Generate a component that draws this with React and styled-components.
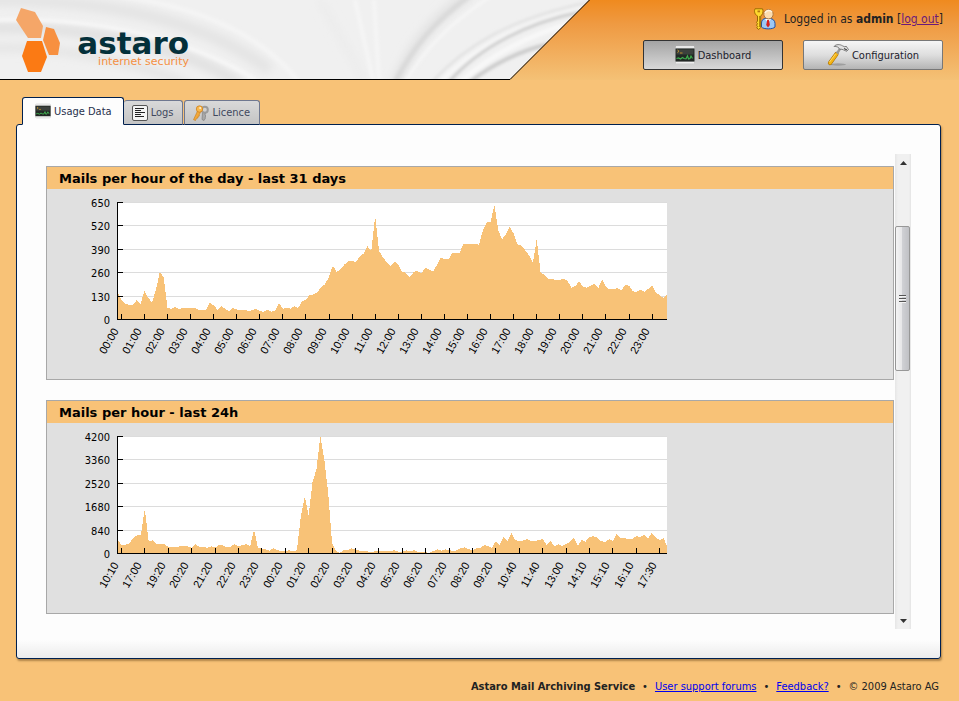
import React, { useState } from "react";
import styled, { createGlobalStyle } from "styled-components";

const GlobalStyle = createGlobalStyle`
  * {
    box-sizing: border-box;
  }
  body {
    margin: 0;
    background-color: #f8c277;
    color: #222;
    font-family: "DejaVu Sans Condensed", "DejaVu Sans", sans-serif;
    font-size: 11px;
    line-height: 16px;
  }
`;

const Header = styled.header`
  display: flex;
  justify-content: space-between;
  height: 80px;
  background: linear-gradient(#ef8a1f, #ef9a42 30%, #f2b060 70%, #f4c176);
`;

const Banner = styled.svg`
  flex: none;
  width: 590px;
  height: 80px;
`;

const HeaderSide = styled.div`
  display: flex;
  flex-direction: column;
  align-items: flex-end;
  gap: 10px;
  padding: 8px 16px 0 0;
`;

const Session = styled.div`
  display: flex;
  align-items: center;
  gap: 8px;
  height: 22px;
  font-size: 12px;
  white-space: nowrap;

  a {
    color: #6a1a7a;
  }
`;

const MainNav = styled.nav`
  display: flex;
  gap: 20px;
`;

const NavButton = styled.button`
  display: flex;
  align-items: center;
  justify-content: center;
  gap: 3px;
  width: 140px;
  height: 30px;
  padding: 0;
  border: 1px solid ${(props) => (props.$active ? "#333" : "#777")};
  border-radius: 2px;
  background: ${(props) =>
    props.$active
      ? "linear-gradient(#a4a4a4, #d8d8d8)"
      : "linear-gradient(#f6f6f6, #dedede 50%, #b4b4b4)"};
  color: #1c1c2c;
  font-family: inherit;
  font-size: 11px;
`;

const Main = styled.main`
  padding: 17px 18px 0 16px;
`;

const TabList = styled.div`
  display: flex;
  align-items: flex-end;
  padding-left: 6px;
`;

const Tab = styled.button`
  position: relative;
  display: flex;
  align-items: center;
  gap: 3px;
  height: ${(props) => (props.$active ? 28 : 25)}px;
  margin: 0 ${(props) => (props.$active ? 0 : 1)}px -1px 0;
  padding: 0 ${(props) => (props.$active ? "11px 0 12px" : "9px 0 8px")};
  border: 1px solid ${(props) => (props.$active ? "#00204f" : "#6f7890")};
  border-bottom-color: ${(props) => (props.$active ? "#fdfdfd" : "#00204f")};
  border-left-width: ${(props) => (props.$joined ? 0 : 1)}px;
  border-radius: 3px 3px 0 0;
  background: ${(props) =>
    props.$active ? "#fdfdfd" : "linear-gradient(#d9d9d9, #c4c4c4)"};
  color: ${(props) => (props.$active ? "#27304c" : "#41485e")};
  font-family: inherit;
  font-size: 11px;
`;

const Panel = styled.section`
  display: flex;
  padding: 29px;
  border: 1px solid #00204f;
  border-radius: 3px;
  background: linear-gradient(to top, #ececec, #fdfdfd 18px);
  box-shadow: 1px 2px 2px rgba(90, 60, 20, 0.45);
`;

const Reports = styled.div`
  display: flex;
  flex: 1;
  flex-direction: column;
  gap: 20px;
  min-width: 0;
  padding: 12px 0 15px;
`;

const Card = styled.article`
  border: 1px solid #a8a8a8;
  background-color: #e0e0e0;
  overflow: hidden;
`;

const CardTitle = styled.h2`
  height: 22px;
  margin: 0;
  padding: 1px 12px 0;
  background-color: #f8c277;
  color: #000;
  font-family: "DejaVu Sans", sans-serif;
  font-size: 13px;
  font-weight: bold;
  line-height: 22px;
`;

const ChartSvg = styled.svg`
  display: block;
  width: 622px;
  height: 190px;
`;

const Scrollbar = styled.div`
  display: flex;
  flex: none;
  flex-direction: column;
  width: 16px;
  margin-left: 1px;
  background: linear-gradient(to right, #e6e6e6, #f0f0f0 3px, #f0f0f0 14px, #e4e4e4);
`;

const ScrollArrow = styled.button`
  display: flex;
  flex: none;
  align-items: center;
  justify-content: center;
  height: 17px;
  padding: 0;
  border: 0;
  background: none;
`;

const ScrollSpace = styled.div`
  flex: ${(props) => props.$size};
`;

const ScrollThumb = styled.div`
  display: flex;
  flex: 144;
  align-items: center;
  justify-content: center;
  width: 15px;
  border: 1px solid #979797;
  border-radius: 2px;
  background: linear-gradient(to right, #f4f4f4, #e6e6e8 45%, #cfd0d4 50%, #c0c1c5);
`;

const Footer = styled.footer`
  display: flex;
  flex-wrap: wrap;
  justify-content: flex-end;
  gap: 7px;
  padding: 20px 20px 6px;

  a {
    color: #0000ee;
  }
`;

function MonitorIcon({ size }) {
  return (
    <svg width={size} height={size} viewBox="0 0 20 20">
      <rect x="0.5" y="1" width="19" height="18" rx="1.5" fill="#c9c9c9" />
      <rect x="1" y="1" width="18" height="2" fill="#e8e8e8" />
      <rect x="0.5" y="3.5" width="19" height="13" fill="#222824" />
      <rect x="1.5" y="4.5" width="17" height="5" fill="#3c413d" />
      <path d="M2.500 5l1.500 1.300L2.500 7.500M5 8h2.500" fill="none" stroke="#c9972a" strokeWidth="0.9" />
      <path
        d="M1.500 13.500l2-.5 2 1 2-1.500 1.500 1 2 .3 1.500-3 1 3.200 1.500-.5 1-2.500 1.500 2.500"
        fill="none"
        stroke="#3fb04f"
        strokeWidth="1.2"
      />
      <rect x="1" y="17" width="18" height="1.500" fill="#efefef" />
    </svg>
  );
}

function LogsIcon() {
  return (
    <svg width="16" height="16" viewBox="0 0 16 16">
      <rect x="0.5" y="0.5" width="15" height="15" rx="1.5" fill="#f4f4f4" stroke="#555" />
      <path
        d="M3 3.500h9M3 5.500h6M3 7.500h10M3 9.500h6M3 11.500h9"
        stroke="#222"
        shapeRendering="crispEdges"
      />
    </svg>
  );
}

function KeysIcon() {
  return (
    <svg width="16" height="16" viewBox="0 0 16 16">
      <path d="M9.500 7l3 1-.5 2 1 1-1 1 .5 1-1.500 2.500-2-1z" fill="#a9a9a9" stroke="#777" strokeWidth="0.6" />
      <circle cx="11.800" cy="4.800" r="3" fill="none" stroke="#9b9b9b" strokeWidth="2" />
      <path d="M4.500 6l3 1.500-1.500 2.500.5 1-1.500.5v1.500l-1.500.3-1 2.200-2-.8z" fill="#f2a83a" stroke="#c57c1c" strokeWidth="0.6" />
      <circle cx="6.500" cy="4" r="3.200" fill="#f8b84c" stroke="#cf8220" strokeWidth="0.8" />
      <circle cx="7.200" cy="3" r="1" fill="#fff0d0" />
    </svg>
  );
}

function HammerIcon() {
  return (
    <svg width="22" height="22" viewBox="0 0 22 22">
      <ellipse cx="11" cy="20.500" rx="8" ry="1.200" fill="#000" opacity="0.18" />
      <path d="M9.500 10L3 19" stroke="#a86d00" strokeWidth="4.200" strokeLinecap="round" />
      <path d="M9.500 10L3 19" stroke="#f4b414" strokeWidth="3" strokeLinecap="round" />
      <path d="M8.500 10L2.500 18" stroke="#ffe27a" strokeWidth="0.8" />
      <path d="M10 9.500l3.500-5.500" stroke="#999" strokeWidth="2.400" />
      <path
        d="M7 2.500C9 0 13 .2 15.500 1.800L18 3l1-1 2.500 3.500-1.800 1.800-3-1.300-1.700-.7-2.500-.2-1-1.600C10 2.500 8 2.300 7 2.500z"
        fill="#e2e2e2"
        stroke="#666"
        strokeWidth="0.8"
      />
      <path d="M17 4.500l3 1.500" stroke="#444" strokeWidth="1.200" />
    </svg>
  );
}

function AdminIcon() {
  return (
    <svg width="22" height="22" viewBox="0 0 22 22">
      <path
        d="M7.500 19v-4c0-3 2-4.500 4-4.500h4.500c3 0 5 2.500 5 5V19c-2 2.500-11.500 2.500-13.500 0z"
        fill="#9cc8f4"
        stroke="#1a4fa8"
      />
      <path d="M11 11l3 3.500 3-3.500z" fill="#fff" />
      <path d="M13.200 12h1.700l1 5-1.900 2.500-1.800-2.500z" fill="#d8201c" />
      <circle cx="14.500" cy="6.200" r="4.700" fill="#fbdcae" stroke="#b0783c" />
      <path d="M11 5c1-3 5-3.500 7-1" stroke="#fff3de" strokeWidth="1.500" fill="none" />
      <path
        d="M1 .800h7.500c.8 1.500.8 4.500-.8 6.200l-1 1v11.500l-2 2-2-1.700 1-1.400-1.200-1.200 1-1.500-1-1.300 1-1.400V8C.5 6.500 0 3 1 .800z"
        fill="#ffd92e"
        stroke="#9a6a00"
      />
      <rect x="3.500" y="2.500" width="2.500" height="1.800" fill="#b67a10" />
      <path d="M5.500 8v11" stroke="#b8860b" />
    </svg>
  );
}

function HeaderBanner() {
  return (
    <Banner viewBox="0 0 590 80">
      <defs>
        <clipPath id="banner-shape">
          <path d="M0 0H589L510 79H0z" />
        </clipPath>
        <filter id="fold" x="-20%" y="-20%" width="140%" height="140%">
          <feGaussianBlur stdDeviation="1.500" />
        </filter>
        <filter id="wideFold" x="-20%" y="-50%" width="140%" height="200%">
          <feGaussianBlur stdDeviation="4" />
        </filter>
      </defs>
      <g clipPath="url(#banner-shape)" fill="none">
        <rect width="590" height="80" fill="#f0f0f0" />
        <g filter="url(#wideFold)">
          <path d="M-10 0C80 0 190 10 270 70" stroke="#e4e4e4" strokeWidth="12" />
          <path d="M-10 28C80 26 180 44 240 84" stroke="#e0e0e0" strokeWidth="10" />
          <path d="M-10 48C60 46 140 62 190 86" stroke="#e4e4e4" strokeWidth="8" />
          <path d="M470-6C430 20 410 50 395 84" stroke="#e2e2e2" strokeWidth="10" />
          <path d="M320 0C335 30 350 50 365 84" stroke="#ebebeb" strokeWidth="6" />
        </g>
        <g filter="url(#fold)">
          <path d="M-10 20C90 16 190 36 262 84" stroke="#f6f6f6" strokeWidth="4" />
          <path d="M120-4C190 6 260 30 300 84" stroke="#f4f4f4" strokeWidth="5" />
          <path d="M374 0L379 80M355 0L373 80" stroke="#f5f5f5" strokeWidth="4" />
          <path d="M475-8C432 22 412 50 395 82" stroke="#dadada" strokeWidth="5" />
          <path d="M494-6C446 26 424 50 404 84" stroke="#f6f6f6" strokeWidth="3" />
          <path d="M590 2C510 18 465 46 432 82" stroke="#dfdfdf" strokeWidth="2" />
          <path d="M590 8C515 24 475 48 440 82" stroke="#f7f7f7" strokeWidth="4" />
          <path d="M580 12C530 22 480 46 449 82" stroke="#cccccc" strokeWidth="3" />
          <path d="M570 24C530 34 490 56 460 82" stroke="#f8f8f8" strokeWidth="5" />
          <path d="M550 44C520 50 490 66 470 82" stroke="#cccccc" strokeWidth="4" />
        </g>
      </g>
      <path d="M0 79.500H510L589.500 0" fill="none" stroke="#000" />
      <path d="M21 8l14 4 8 14-2 12H28L16 20z" fill="#f5a668" />
      <path d="M46 27l8 2 6 14-2 12h-9l-6-15z" fill="#f79040" />
      <path d="M27 41h15l5 16-6 15H28l-6-16z" fill="#fb7a14" />
      <text
        x="189"
        y="54"
        textAnchor="end"
        fill="#04303a"
        fontFamily="DejaVu Sans, sans-serif"
        fontWeight="bold"
        fontSize="31"
      >
        astaro
      </text>
      <text
        x="189"
        y="65"
        textAnchor="end"
        fill="#f58f42"
        fontFamily="DejaVu Sans, sans-serif"
        fontSize="11"
      >
        internet security
      </text>
    </Banner>
  );
}

// samples are taken on a scale of 0 to 348, the top grid line
const SAMPLE_MAX = 348;
const PLOT = { left: 71, right: 620, top: 13, bottom: 130 };

const dayOfMonthMails = {
  title: "Mails per hour of the day - last 31 days",
  scale: [650, 520, 390, 260, 130, 0],
  labels: [
    "00:00", "01:00", "02:00", "03:00", "04:00", "05:00", "06:00", "07:00",
    "08:00", "09:00", "10:00", "11:00", "12:00", "13:00", "14:00", "15:00",
    "16:00", "17:00", "18:00", "19:00", "20:00", "21:00", "22:00", "23:00",
  ],
  samples: [
    82, 58, 45, 42, 42, 56, 45, 84, 62, 50, 87, 140, 124, 34, 30, 36, 30, 33,
    33, 33, 33, 28, 28, 28, 48, 40, 28, 39, 30, 24, 33, 28, 28, 27, 24, 26,
    30, 24, 21, 27, 21, 26, 48, 31, 32, 31, 38, 33, 53, 58, 72, 73, 80, 96,
    104, 126, 159, 140, 148, 162, 171, 174, 169, 186, 195, 216, 203, 306, 203,
    184, 169, 156, 171, 161, 141, 137, 124, 140, 143, 136, 152, 147, 141, 159,
    182, 179, 177, 195, 195, 198, 225, 222, 222, 224, 220, 264, 288, 290, 338,
    264, 237, 252, 274, 254, 222, 219, 205, 189, 167, 238, 138, 131, 118, 119,
    115, 117, 119, 114, 93, 98, 111, 97, 93, 99, 105, 92, 117, 96, 88, 88, 92,
    84, 102, 99, 82, 81, 87, 81, 90, 99, 78, 71, 61, 74,
  ],
};

const lastDayMails = {
  title: "Mails per hour - last 24h",
  scale: [4200, 3360, 2520, 1680, 840, 0],
  labels: [
    "10:10", "17:00", "19:20", "20:20", "21:20", "22:20", "23:20", "00:20",
    "01:20", "02:20", "03:20", "04:20", "05:20", "06:20", "07:20", "08:20",
    "09:20", "10:40", "11:40", "13:00", "14:10", "15:10", "16:10", "17:30",
  ],
  samples: [
    39, 24, 24, 29, 44, 53, 54, 132, 34, 38, 27, 27, 27, 18, 18, 18, 20, 22,
    20, 15, 26, 18, 19, 15, 20, 16, 24, 23, 17, 19, 26, 20, 23, 26, 20, 70,
    16, 13, 11, 7, 14, 8, 6, 6, 8, 6, 8, 110, 168, 112, 212, 248, 348, 280,
    180, 30, 6, 1, 8, 9, 14, 10, 7, 6, 5, 3, 5, 6, 6, 6, 6, 8, 4, 3, 8, 6, 8,
    4, 3, 2, 0, 6, 11, 7, 11, 9, 6, 8, 14, 17, 11, 9, 14, 15, 23, 21, 15, 36,
    24, 48, 36, 60, 38, 36, 37, 41, 36, 36, 38, 42, 24, 36, 20, 26, 21, 26,
    33, 45, 21, 39, 34, 48, 50, 46, 35, 33, 41, 36, 57, 45, 44, 42, 42, 50,
    48, 54, 43, 60, 45, 39, 44, 20,
  ],
};

function Chart({ title, scale, labels, samples }) {
  const width = PLOT.right - PLOT.left;
  const height = PLOT.bottom - PLOT.top;
  const step = (width + 1) / (samples.length - 1);
  const sampleX = (i) => Math.min(PLOT.left - 0.5 + i * step, PLOT.right);
  const lineY = (i) => PLOT.bottom - Math.round((height * (5 - i)) / 5);
  const tickX = (i) => Math.floor(sampleX(1 + i * 6));
  const points = samples.map((sample, i) => {
    const y = PLOT.bottom - (sample / SAMPLE_MAX) * height;
    return `${sampleX(i)},${y}`;
  });

  return (
    <ChartSvg viewBox="0 0 622 190" role="img" aria-label={title}>
      <g shapeRendering="crispEdges">
        <rect x={PLOT.left} y={PLOT.top + 1} width={width} height={height} fill="#fff" />
        {scale.map((value, i) => (
          <rect key={value} x={PLOT.left} y={lineY(i)} width={width} height="1" fill="#dcdcdc" />
        ))}
        <polygon
          points={`${PLOT.left},${PLOT.bottom} ${points.join(" ")} ${PLOT.right},${PLOT.bottom}`}
          fill="#f8c277"
        />
        <rect x={PLOT.left - 1} y={PLOT.top} width="1" height={height + 1} />
        <rect x={PLOT.left - 1} y={PLOT.bottom} width={width + 1} height="1" />
        {scale.map((value, i) => (
          <rect key={value} x={PLOT.left - 1} y={lineY(i)} width="6" height="1" />
        ))}
        {labels.map((label, i) => (
          <rect key={label} x={tickX(i)} y={PLOT.bottom - 5} width="1" height="5" />
        ))}
      </g>
      <g textAnchor="end" fontSize="11">
        {scale.map((value, i) => (
          <text key={value} x={PLOT.left - 8} y={lineY(i) + 5}>
            {value}
          </text>
        ))}
      </g>
      <g textAnchor="end" fontSize="11" fontFamily="Liberation Sans, sans-serif">
        {labels.map((label, i) => (
          <text
            key={label}
            transform={`translate(${tickX(i) - 2} ${PLOT.bottom + 12}) rotate(-60)`}
          >
            {label}
          </text>
        ))}
      </g>
    </ChartSvg>
  );
}

export default function App() {
  const [section, setSection] = useState("dashboard");
  const [tab, setTab] = useState("usage");

  return (
    <>
      <GlobalStyle />
      <Header>
        <HeaderBanner />
        <HeaderSide>
          <Session>
            <AdminIcon />
            <span>
              Logged in as <b>admin</b> [<a href="#logout">log out</a>]
            </span>
          </Session>
          <MainNav>
            <NavButton
              $active={section === "dashboard"}
              onClick={() => setSection("dashboard")}
            >
              <MonitorIcon size={20} />
              Dashboard
            </NavButton>
            <NavButton
              $active={section === "configuration"}
              onClick={() => setSection("configuration")}
            >
              <HammerIcon />
              Configuration
            </NavButton>
          </MainNav>
        </HeaderSide>
      </Header>
      <Main>
        <TabList role="tablist">
          <Tab
            role="tab"
            aria-selected={tab === "usage"}
            $active={tab === "usage"}
            onClick={() => setTab("usage")}
          >
            <MonitorIcon size={16} />
            Usage Data
          </Tab>
          <Tab
            role="tab"
            aria-selected={tab === "logs"}
            $active={tab === "logs"}
            $joined
            onClick={() => setTab("logs")}
          >
            <LogsIcon />
            Logs
          </Tab>
          <Tab
            role="tab"
            aria-selected={tab === "licence"}
            $active={tab === "licence"}
            onClick={() => setTab("licence")}
          >
            <KeysIcon />
            Licence
          </Tab>
        </TabList>
        <Panel>
          <Reports>
            {[dayOfMonthMails, lastDayMails].map((report) => (
              <Card key={report.title}>
                <CardTitle>{report.title}</CardTitle>
                <Chart {...report} />
              </Card>
            ))}
          </Reports>
          <Scrollbar>
            <ScrollArrow aria-label="Scroll up">
              <svg width="7" height="4" viewBox="0 0 7 4">
                <path d="M0 4l3.500-4L7 4z" fill="#333" />
              </svg>
            </ScrollArrow>
            <ScrollSpace $size={55} />
            <ScrollThumb>
              <svg width="7" height="9" viewBox="0 0 7 9" shapeRendering="crispEdges">
                <path d="M0 1.500h7M0 4.500h7M0 7.500h7" stroke="#555" />
                <path d="M0 2.500h7M0 5.500h7M0 8.500h7" stroke="#f4f4f4" />
              </svg>
            </ScrollThumb>
            <ScrollSpace $size={242} />
            <ScrollArrow aria-label="Scroll down">
              <svg width="7" height="4" viewBox="0 0 7 4">
                <path d="M0 0h7L3.500 4z" fill="#333" />
              </svg>
            </ScrollArrow>
          </Scrollbar>
        </Panel>
      </Main>
      <Footer>
        <b>Astaro Mail Archiving Service</b>
        <span>•</span>
        <a href="#forums">User support forums</a>
        <span>•</span>
        <a href="#feedback">Feedback?</a>
        <span>•</span>
        <span>© 2009 Astaro AG</span>
      </Footer>
    </>
  );
}
